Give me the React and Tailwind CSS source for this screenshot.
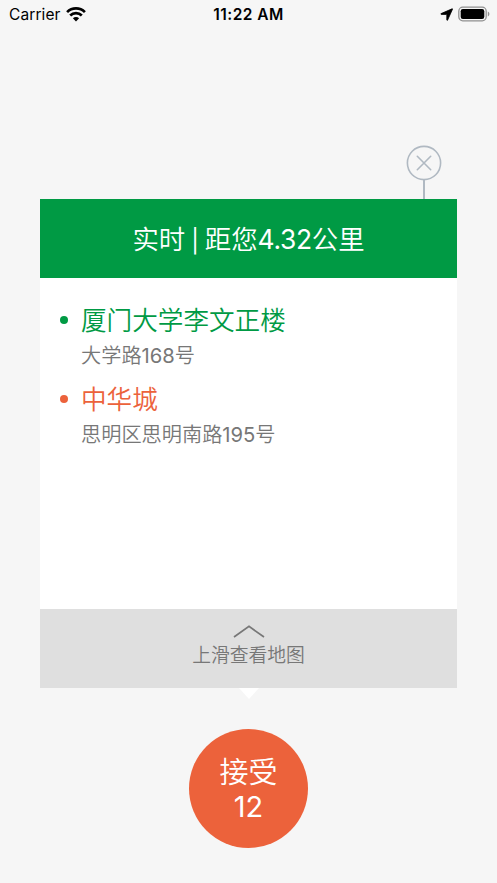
import React, { useState } from 'react';

const STOPS = [
  { id: 'start', name: '厦门大学李文正楼', road: '大学路', number: '168', dot: 'bg-[#009a44]', text: 'text-[#009a44]' },
  { id: 'end', name: '中华城', road: '思明区思明南路', number: '195', dot: 'bg-[#ec623b]', text: 'text-[#ec623b]' },
];

const StatusBar = () => (
  <div className="grid grid-cols-3 items-center h-7 pl-[9px] pr-[7px] text-black">
    <div className="flex items-center gap-[6px]">
      <span className="pt-px text-[15.5px] leading-7 font-normal tracking-[0.1px]">Carrier</span>
      <svg className="-ml-px" width="20" height="15" viewBox="0 0 20 15" fill="none" stroke="currentColor" strokeWidth="2.7">
        <path d="M1.1 5.1a12.6 12.6 0 0 1 17.8 0" />
        <path d="M4.2 8.5a8.2 8.2 0 0 1 11.6 0" />
        <path d="M10 14.4 6.9 11.3a4.4 4.4 0 0 1 6.2 0z" fill="currentColor" stroke="none" />
      </svg>
    </div>
    <span className="pt-px pr-0.5 text-center text-[15.5px] leading-7 font-semibold tracking-[0.45px] whitespace-nowrap">11:22 AM</span>
    <div className="flex items-center justify-end gap-[5px]">
      <svg width="13" height="13" viewBox="0 0 13 13" fill="currentColor" stroke="currentColor" strokeWidth=".8" strokeLinejoin="round">
        <path d="M12.1.8c.3-.1.5.1.4.4L7.6 12.1c-.2.4-.8.4-.8-.1V6.7c0-.2-.1-.3-.3-.3H1.2c-.5 0-.5-.6-.1-.8z" />
      </svg>
      <svg className="-mt-[2px]" width="32" height="16" viewBox="0 0 32 16" fill="none">
        <rect x=".8" y="1.2" width="27.4" height="13.6" rx="4" stroke="#909090" strokeWidth="1.3" />
        <rect x="2.7" y="3" width="23.6" height="10" rx="2.2" fill="#000" />
        <path d="M29.8 5.5v5c1-.4 1.6-1.4 1.6-2.5s-.6-2.1-1.6-2.5z" fill="#909090" />
      </svg>
    </div>
  </div>
);

const Stop = ({ stop }) => (
  <li className="flex">
    <span className={`mt-[18px] ml-5 mr-[13px] size-2 shrink-0 rounded-full ${stop.dot}`}></span>
    <div>
      <h2 className={`pt-px text-[25.6px] leading-[43px] ${stop.text}`}>{stop.name}</h2>
      <p className="text-[20.2px] leading-[27px] h-[34.5px] text-[#777777]">
        {stop.road}<span className="font-normal">{stop.number}</span>号
      </p>
    </div>
  </li>
);

const App = () => {
  const [open, setOpen] = useState(true);

  return (
    <div className="flex flex-col w-full h-[883px] overflow-hidden bg-[#f6f6f6] font-['Inter','Noto_Sans_CJK_SC',sans-serif] font-[350]">
      <StatusBar />

      <div className={`flex flex-col mx-10 mt-[117px] ${open ? '' : 'invisible'}`}>
        <div className="flex flex-col items-center self-end mr-[15px]">
          <button type="button" onClick={() => setOpen(false)} aria-label="关闭" className="block">
            <svg width="36" height="36" viewBox="0 0 36 36" fill="none" stroke="#b0b9c2" strokeWidth="1.6">
              <circle cx="18" cy="18" r="16.6" />
              <path d="m11.3 11.3 13.4 13.4M24.7 11.3 11.3 24.7" strokeLinecap="round" />
            </svg>
          </button>
          <div className="-mt-px w-[1.5px] h-[19px] bg-[#b0b9c2]"></div>
        </div>

        <section className="bg-white">
          <header className="h-[79px] pt-px bg-[#009a44] text-white text-center text-[26.4px] leading-[79px] [word-spacing:-1.5px]">
            实时 <span className="text-[23px] font-normal">|</span> 距您<span className="font-normal tracking-[-0.3px]">4.32</span>公里
          </header>
          <ul className="h-[331px] pt-5">
            {STOPS.map((stop) => <Stop key={stop.id} stop={stop} />)}
          </ul>
          <footer className="flex flex-col items-center h-[79px] pt-4 bg-[#dfdfdf] text-[#777777]">
            <svg width="32" height="13" viewBox="0 0 32 13" fill="none" stroke="currentColor" strokeWidth="1.7">
              <path d="M1 12 16 1.4 31 12" />
            </svg>
            <span className="text-[18.8px] leading-9">上滑查看地图</span>
          </footer>
        </section>
        <svg className="self-center" width="20" height="11" viewBox="0 0 20 11" fill="#fff">
          <path d="M0 0h20L10 11z" />
        </svg>
      </div>

      <button type="button" className="flex flex-col items-center self-center mt-[30px] size-[119px] pt-[27px] rounded-full bg-[#ec623b] text-white text-[29px] leading-[34px]">
        <span>接受</span>
        <span className="font-normal">12</span>
      </button>
    </div>
  );
};

export default App;
